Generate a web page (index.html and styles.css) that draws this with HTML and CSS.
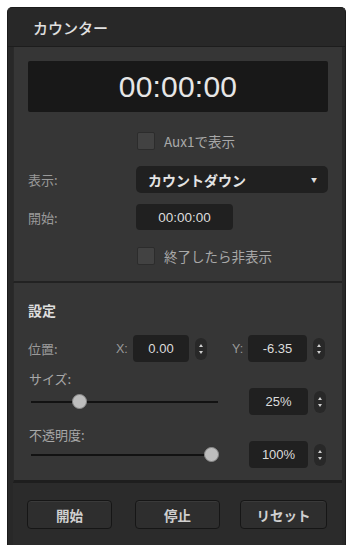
FILE: index.html
```html
<!DOCTYPE html>
<html lang="ja">
<head>
<meta charset="utf-8">
<link rel="stylesheet" href="styles.css">
</head>
<body>
<div class="panel">
  <div class="header">カウンター</div>
  <div class="section sec-main">
    <div class="timer">00:00:00</div>
    <div class="row check-row">
      <span class="checkbox"></span><span class="check-label">Aux1で表示</span>
    </div>
    <div class="row field-row dd-row">
      <span class="label">表示:</span>
      <div class="dropdown"><span>カウントダウン</span><span class="arrow">▼</span></div>
    </div>
    <div class="row field-row start-row">
      <span class="label">開始:</span>
      <div class="input time-input">00:00:00</div>
    </div>
    <div class="row check-row hide-row">
      <span class="checkbox"></span><span class="check-label">終了したら非表示</span>
    </div>
  </div>
  <div class="section sec-settings">
    <div class="title">設定</div>
    <div class="row pos-row">
      <span class="label pos-label">位置:</span>
      <span class="axis">X:</span>
      <div class="input num">0.00</div>
      <div class="spinner"><i class="up"></i><i class="down"></i></div>
      <span class="axis axis-y">Y:</span>
      <div class="input num">-6.35</div>
      <div class="spinner"><i class="up"></i><i class="down"></i></div>
    </div>
    <div class="slabel size-label">サイズ:</div>
    <div class="row slider-row size-row">
      <div class="slider"><div class="track"></div><div class="thumb" style="left:44px"></div></div>
      <div class="input num">25%</div>
      <div class="spinner"><i class="up"></i><i class="down"></i></div>
    </div>
    <div class="slabel op-label">不透明度:</div>
    <div class="row slider-row op-row">
      <div class="slider"><div class="track short"></div><div class="thumb" style="left:176px"></div></div>
      <div class="input num">100%</div>
      <div class="spinner"><i class="up"></i><i class="down"></i></div>
    </div>
  </div>
  <div class="footer">
    <button class="btn b1">開始</button>
    <button class="btn b2">停止</button>
    <button class="btn b3">リセット</button>
  </div>
</div>
</body>
</html>
```

FILE: styles.css
```css
* { box-sizing: border-box; }
html, body { margin: 0; padding: 0; background: #ffffff; }
body {
  font-family: "Liberation Sans", "Noto Sans CJK JP", sans-serif;
  height: 545px;
  overflow: hidden;
}
.panel {
  margin: 7px 5px 0 7px;
  height: 538px;
  background: #282828;
  border-radius: 5px 5px 0 0;
  border: 1px solid #1c1c1c;
  border-bottom: none;
  display: flex;
  flex-direction: column;
}
.header {
  height: 39px;
  padding: 12px 0 0 25px;
  color: #e0e0e0;
  font-size: 15px;
  line-height: 16px;
  font-family: "Noto Sans CJK JP", sans-serif;
  font-weight: 500;
  border-bottom: 1px solid #1d1d1d;
}
.section {
  margin: 0 3px 0 5px;
  background: #363636;
  padding-left: 14px;
  border-left: 1px solid #2a2a2a;
}
.sec-main {
  padding-top: 14px;
  padding-bottom: 16px;
  border-bottom: 2px solid #222;
}
.timer {
  width: 300px;
  height: 51px;
  background: #181818;
  border-radius: 2px;
  color: #e6e6e6;
  font-size: 30px;
  line-height: 51px;
  text-align: center;
  letter-spacing: 0.2px;
  font-weight: 300;
}
.row { display: flex; align-items: center; }
.check-row { margin-top: 20px; padding-left: 109px; height: 18px; }
.hide-row { margin-top: 17px; }
.checkbox {
  width: 18px; height: 18px;
  background: #424242;
  border: 1px solid #2c2c2c;
  border-radius: 2px;
}
.check-label {
  margin-left: 9px;
  color: #a8a8a8;
  font-size: 13.5px;
  font-family: "Noto Sans CJK JP", sans-serif;
}
.label {
  color: #9a9a9a;
  font-size: 13px;
  font-family: "Noto Sans CJK JP", sans-serif;
}
.field-row .label { width: 108px; }
.dd-row { margin-top: 16px; height: 27px; }
.dropdown {
  width: 192px; height: 27px;
  background: #202020;
  border-radius: 5px;
  display: flex; align-items: center; justify-content: space-between;
  padding: 0 11px 0 12px;
  color: #e4e4e4;
  font-size: 14px;
  font-weight: bold;
  font-family: "Noto Sans CJK JP", sans-serif;
}
.arrow { font-size: 6px; color: #ddd; }
.start-row { margin-top: 11px; height: 26px; }
.input {
  background: #202020;
  border-radius: 4px;
  color: #dcdcdc;
  display: flex; align-items: center; justify-content: center;
  font-size: 13px;
}
.time-input { width: 97px; height: 26px; font-size: 13.5px; }
.sec-settings {
  padding-top: 17px;
  padding-bottom: 12px;
  flex: 0 0 auto;
  border-bottom: 3px solid #1e1e1e;
}
.title {
  color: #dedede;
  font-size: 14px;
  font-weight: bold;
  line-height: 20px;
  font-family: "Noto Sans CJK JP", sans-serif;
}
.pos-row { margin-top: 15px; height: 27px; }
.pos-label { width: 88px; }
.axis { width: 17px; color: #9a9a9a; font-size: 12.5px; }
.axis-y { margin-left: 25px; width: 16px; }
.num { width: 59px; height: 27px; }
.pos-row .num:first-of-type { width: 56px; }
.spinner {
  width: 12px; height: 22px;
  margin-left: 6px;
  background: #282828;
  border-radius: 6px;
  display: flex; flex-direction: column; align-items: center; justify-content: center;
  gap: 4px;
}
.spinner i { display: block; width: 0; height: 0; border-left: 2.5px solid transparent; border-right: 2.5px solid transparent; }
.spinner .up { border-bottom: 3px solid #cfcfcf; }
.spinner .down { border-top: 3px solid #cfcfcf; }
.slabel {
  color: #a8a8a8;
  font-size: 13px;
  line-height: 14px;
  font-family: "Noto Sans CJK JP", sans-serif;
  padding-left: 1px;
}
.size-label { margin-top: 10px; }
.slider-row { height: 27px; }
.size-row { margin-top: 2px; }
.op-label { margin-top: 13px; line-height: 13px; }
.op-row { margin-top: 0; }
.slider {
  position: relative;
  width: 221px;
  height: 27px;
  display: flex; align-items: center;
  padding-left: 3px;
}
.track { width: 187px; height: 2px; background: #121212; }
.track.short { width: 180px; }
.thumb {
  position: absolute;
  top: 6px;
  width: 15px; height: 15px;
  border-radius: 50%;
  background: #bdbdbd;
  border: 1px solid #8a8a8a;
}
.footer {
  flex: 1;
  background: #2b2b2b;
  margin: 0 3px 0 5px;
  padding: 17px 0 0 14px;
  display: flex;
  align-items: flex-start;
}
.btn {
  height: 29px;
  background: #2e2e2e;
  border: 1px solid #161616;
  border-radius: 4px;
  box-shadow: inset 0 1px 0 #3a3a3a;
  color: #d0d0d0;
  font-size: 13.5px;
  font-weight: bold;
  font-family: "Noto Sans CJK JP", sans-serif;
  padding: 0;
}
.b1 { width: 85px; }
.b2 { width: 85px; margin-left: 23px; }
.b3 { width: 87px; margin-left: 20px; }
```
